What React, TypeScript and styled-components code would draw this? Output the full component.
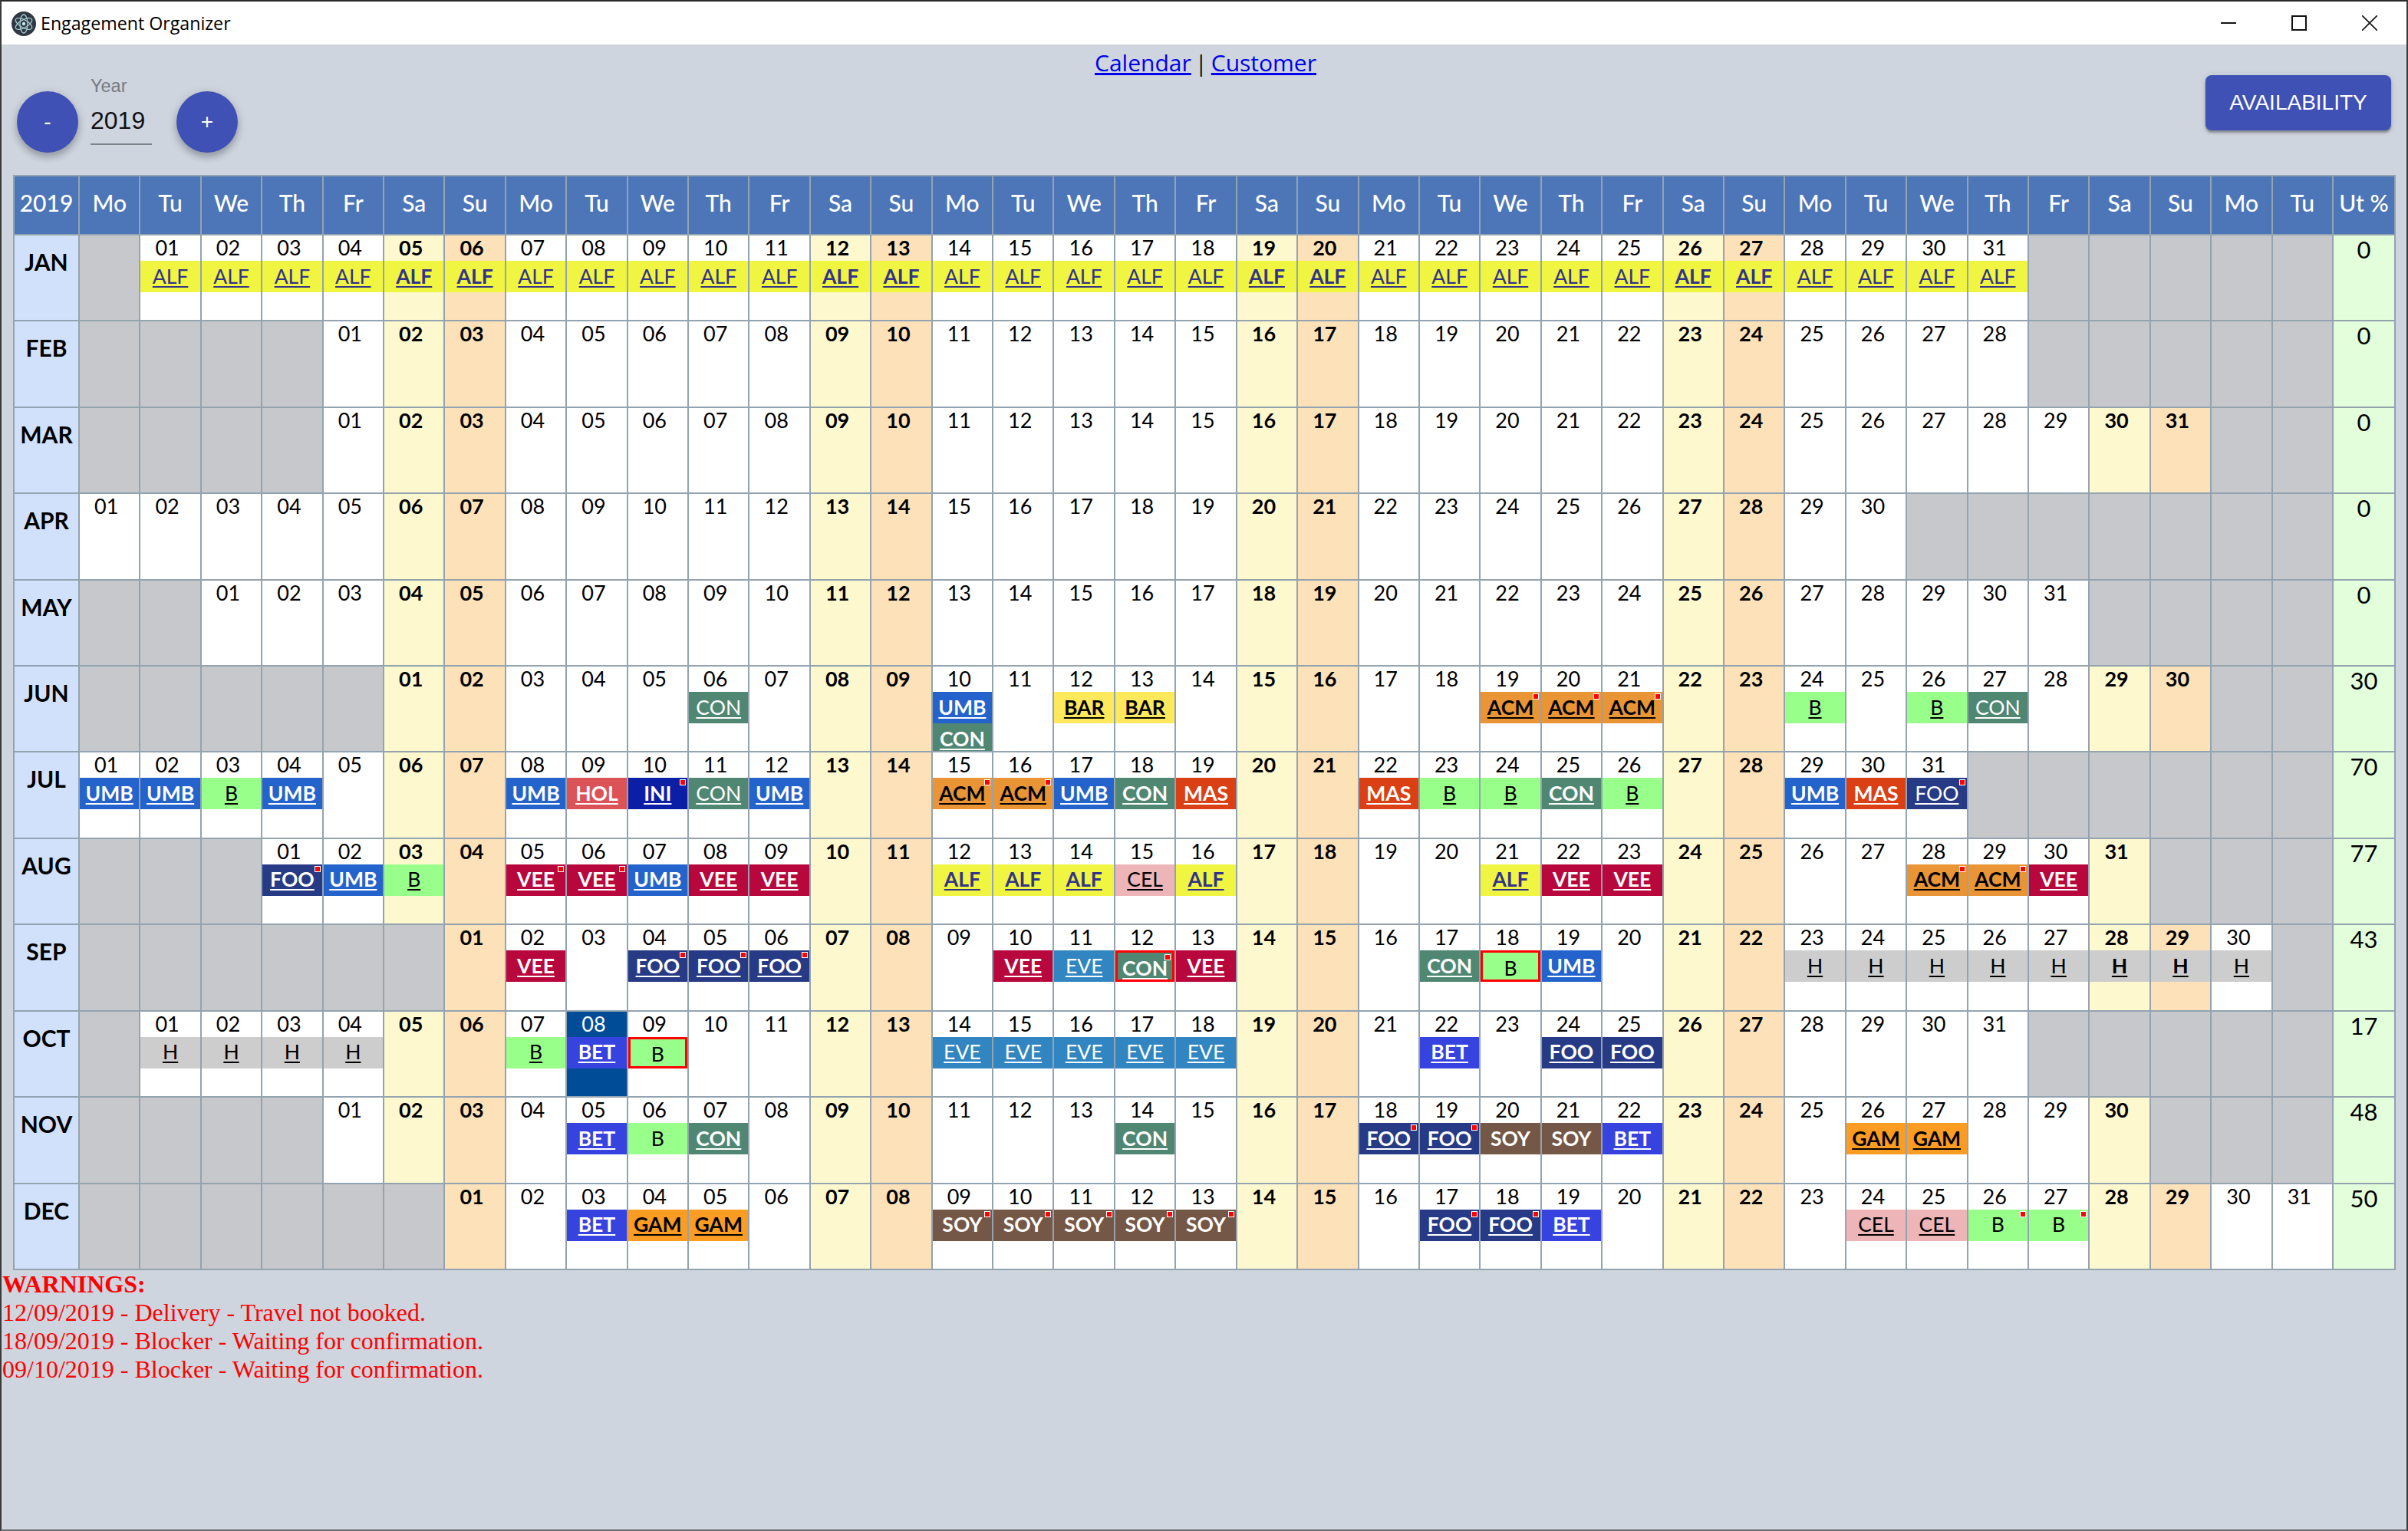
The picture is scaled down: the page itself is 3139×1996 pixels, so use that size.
import React from "react";
import styled, { createGlobalStyle } from "styled-components";

const GlobalStyle = createGlobalStyle`
  html, body {
    margin: 0;
    padding: 0;
    background: #ced5df;
  }
  * {
    box-sizing: border-box;
  }
`;

const DAY_NAMES = ["Mo", "Tu", "We", "Th", "Fr", "Sa", "Su"];
const MONTHS = ["JAN", "FEB", "MAR", "APR", "MAY", "JUN", "JUL", "AUG", "SEP", "OCT", "NOV", "DEC"];
const UTILISATION = [0, 0, 0, 0, 0, 30, 70, 77, 43, 17, 48, 50];
const DAY_COLUMNS = 37;
const YEAR = 2019;

const CLIENT_COLOURS: Record<string, { bg: string; fg: string }> = {
  ALF: { bg: "#f0f542", fg: "#33338a" },
  UMB: { bg: "#2463cb", fg: "#ffffff" },
  CON: { bg: "#4f8773", fg: "#ffffff" },
  BAR: { bg: "#fee85c", fg: "#000000" },
  ACM: { bg: "#e99536", fg: "#000000" },
  HOL: { bg: "#dc5357", fg: "#ffffff" },
  INI: { bg: "#0b1fa6", fg: "#ffffff" },
  MAS: { bg: "#da4013", fg: "#ffffff" },
  B: { bg: "#99ff8b", fg: "#000000" },
  FOO: { bg: "#263a85", fg: "#ffffff" },
  VEE: { bg: "#b8073c", fg: "#ffffff" },
  CEL: { bg: "#edb5b7", fg: "#000000" },
  EVE: { bg: "#3186c2", fg: "#ffffff" },
  H: { bg: "#cdcdcd", fg: "#000000" },
  BET: { bg: "#3643df", fg: "#ffffff" },
  GAM: { bg: "#fd9c22", fg: "#000000" },
  SOY: { bg: "#745747", fg: "#ffffff" },
};

const THIN_CODES = ["EVE", "CEL", "B", "H"];

// day or range : code, then ! warning flag, # red outline, ~ thin text, ^ no underline, ' thin on weekdays
const BOOKINGS: Record<number, string> = {
  0: "1-31:ALF'",
  5: "6:CON~ 10:UMB 10:CON 12:BAR 13:BAR 19-21:ACM! 24:B 26:B 27:CON~",
  6: "1:UMB 2:UMB 3:B 4:UMB 8:UMB 9:HOL 10:INI! 11:CON~ 12:UMB 15:ACM! 16:ACM! 17:UMB 18:CON 19:MAS 22:MAS 23:B 24:B 25:CON 26:B 29:UMB 30:MAS 31:FOO~!",
  7: "1:FOO! 2:UMB 3:B~ 5:VEE! 6:VEE! 7:UMB 8:VEE 9:VEE 12-14:ALF 15:CEL 16:ALF 21:ALF 22:VEE 23:VEE 28:ACM! 29:ACM! 30:VEE",
  8: "2:VEE 4-6:FOO! 10:VEE 11:EVE 12:CON!# 13:VEE 17:CON 18:B^# 19:UMB 23-30:H",
  9: "1-4:H 7:B 8:BET 9:B^# 14-18:EVE 22:BET 24:FOO 25:FOO",
  10: "5:BET 6:B^ 7:CON 14:CON 18:FOO! 19:FOO! 20:SOY^ 21:SOY^ 22:BET 26:GAM 27:GAM",
  11: "3:BET 4:GAM 5:GAM 9-13:SOY^! 17:FOO! 18:FOO! 19:BET 24:CEL 25:CEL 26:B^! 27:B^!",
};

interface Booking {
  code: string;
  flag: boolean;
  outline: boolean;
  thin: boolean;
  light: boolean;
  plain: boolean;
}

const parseBookings = (month: number) => {
  const byDay: Record<number, Booking[]> = {};
  (BOOKINGS[month] || "").split(" ").filter(Boolean).forEach((token) => {
    const [days, rest] = token.split(":");
    const [from, to] = days.split("-").map(Number);
    const code = rest.replace(/[^A-Z]/g, "");
    for (let d = from; d <= (to || from); d++) {
      (byDay[d] = byDay[d] || []).push({
        code,
        flag: rest.includes("!"),
        outline: rest.includes("#"),
        thin: rest.includes("~"),
        light: rest.includes("'") || THIN_CODES.includes(code),
        plain: rest.includes("^"),
      });
    }
  });
  return byDay;
};

const Frame = styled.div`
  width: 3139px;
  height: 1996px;
  display: flex;
  flex-direction: column;
  background: #ced5df;
  border-top: 2px solid #2b2b2b;
  border-left: 2px solid #3a3a3a;
  border-right: 2px solid #3a3a3a;
  border-bottom: 2px solid #6b6b6b;
  overflow: hidden;
`;

const TitleBar = styled.div`
  height: 56px;
  flex-shrink: 0;
  display: flex;
  align-items: center;
  background: #ffffff;
  padding: 0 2px 0 13px;
`;

const AppIcon = styled.svg`
  width: 32px;
  height: 32px;
  margin-right: 6px;
  margin-top: 2px;
`;

const AppTitle = styled.span`
  flex: 1;
  font-family: "Open Sans", sans-serif;
  font-size: 23.2px;
  color: #000000;
`;

const WindowButton = styled.div`
  width: 92px;
  height: 56px;
  display: flex;
  align-items: center;
  justify-content: center;
  svg {
    display: block;
  }
`;

const Toolbar = styled.div`
  height: 170px;
  flex-shrink: 0;
  display: grid;
  grid-template-columns: 1fr auto 1fr;
`;

const YearGroup = styled.div`
  align-self: end;
  display: flex;
  align-items: flex-end;
  padding: 0 0 29px 20px;
`;

const RoundButton = styled.button`
  width: 80px;
  height: 80px;
  border: none;
  border-radius: 50%;
  background: #3f51b5;
  color: #ffffff;
  font-family: "Liberation Sans", sans-serif;
  font-size: 28px;
  box-shadow: 0 6px 10px rgba(0, 0, 0, 0.22), 0 2px 14px rgba(0, 0, 0, 0.12);
  padding: 0;
`;

const YearField = styled.div`
  width: 80px;
  margin: 0 32px 10px 16px;
  font-family: "Liberation Sans", sans-serif;
  border-bottom: 2px solid #808488;
`;

const YearLabel = styled.div`
  font-size: 23.5px;
  line-height: 28px;
  padding-bottom: 2px;
  color: #777c82;
`;

const YearValue = styled.div`
  font-size: 32px;
  line-height: 36px;
  padding: 11px 0 12px;
  color: #111111;
`;

const NavLinks = styled.div`
  padding: 4px 0 0 4px;
  font-family: "Open Sans", sans-serif;
  font-size: 30px;
  line-height: 40px;
  word-spacing: -3px;
  color: #111111;
  a {
    color: #0000ee;
    text-decoration: underline;
  }
`;

const ActionCell = styled.div`
  display: flex;
  justify-content: flex-end;
  align-items: flex-start;
  padding: 40px 20px 0 0;
`;

const AvailabilityButton = styled.button`
  width: 242px;
  height: 72px;
  border: none;
  border-radius: 8px;
  background: #3f51b5;
  color: #ffffff;
  font-family: "Liberation Sans", sans-serif;
  font-size: 28px;
  padding: 0;
  box-shadow: 0 3px 3px rgba(0, 0, 0, 0.3), 0 1px 8px rgba(0, 0, 0, 0.12);
`;

const Calendar = styled.div`
  width: 3106px;
  height: 1428px;
  margin-left: 15px;
  flex-shrink: 0;
  padding: 2px;
  display: grid;
  grid-template-columns: 83px repeat(${DAY_COLUMNS}, 1fr) 79px;
  grid-template-rows: 75px repeat(12, 1fr);
  gap: 2px;
  background: #93a3b0;
  font-family: "Lato", sans-serif;
`;

const HeadCell = styled.div`
  display: flex;
  align-items: center;
  justify-content: center;
  padding-bottom: 7px;
  background: #4d76b8;
  color: #ffffff;
  font-size: 30px;
  font-weight: 500;
`;

const MonthCell = styled.div`
  background: #d1e1fc;
  color: #000000;
  font-size: 30px;
  font-weight: 700;
  line-height: 36px;
  text-align: center;
  padding-top: 16px;
`;

const UtilCell = styled.div`
  background: #e3fedb;
  color: #000000;
  font-size: 31px;
  line-height: 34px;
  text-align: center;
  padding-top: 1px;
`;

const EmptyCell = styled.div`
  background: #c6c8cc;
`;

const DayCell = styled.div<{ $weekday: number; $today: boolean }>`
  display: flex;
  flex-direction: column;
  min-width: 0;
  min-height: 0;
  overflow: hidden;
  background: ${(p) =>
    p.$today ? "#004c97" : p.$weekday === 5 ? "#fef8cf" : p.$weekday === 6 ? "#fde2b9" : "#ffffff"};
  color: ${(p) => (p.$today ? "#ffffff" : "#000000")};
`;

const DayNumber = styled.div<{ $bold: boolean }>`
  flex-shrink: 0;
  height: 33px;
  line-height: 31px;
  padding-right: 8px;
  text-align: center;
  font-size: 27px;
  font-weight: ${(p) => (p.$bold ? 700 : 400)};
`;

const Bar = styled.div<{ $code: string; $outline: boolean; $bold: boolean; $plain: boolean }>`
  position: relative;
  flex-shrink: 0;
  height: 41px;
  display: flex;
  align-items: center;
  justify-content: center;
  background: ${(p) => CLIENT_COLOURS[p.$code].bg};
  color: ${(p) => CLIENT_COLOURS[p.$code].fg};
  font-size: 26.5px;
  font-weight: ${(p) => (p.$bold ? 700 : 400)};
  text-decoration: ${(p) => (p.$plain ? "none" : "underline")};
  text-decoration-thickness: 2px;
  text-underline-offset: 3px;
  text-decoration-skip-ink: none;
  border: ${(p) => (p.$outline ? "3px solid #ff0000" : "none")};
  padding: ${(p) => (p.$outline ? "4px 0 0" : "0 0 2px")};
`;

const Flag = styled.span`
  position: absolute;
  top: 2px;
  right: 2px;
  width: 8px;
  height: 8px;
  background: #ff0000;
  border: 1px solid #ffffff;
`;

const Warnings = styled.div`
  padding-left: 1px;
  font-family: "Liberation Serif", serif;
  font-size: 32px;
  line-height: 37px;
  color: #ff0000;
`;

const WarningTitle = styled.div`
  font-weight: 700;
`;

const ElectronIcon = () => (
  <AppIcon viewBox="0 0 32 32">
    <circle cx="16" cy="16" r="16" fill="#2f3742" />
    <g fill="none" stroke="#a6c9cf" strokeWidth="1.3">
      <ellipse cx="16" cy="16" rx="12" ry="5" transform="rotate(30 16 16)" />
      <ellipse cx="16" cy="16" rx="12" ry="5" transform="rotate(90 16 16)" />
      <ellipse cx="16" cy="16" rx="12" ry="5" transform="rotate(150 16 16)" />
    </g>
    <circle cx="16" cy="16" r="2.2" fill="#c9e6ea" />
  </AppIcon>
);

const MonthRow = ({ month }: { month: number }) => {
  const offset = (new Date(YEAR, month, 1).getDay() + 6) % 7;
  const length = new Date(YEAR, month + 1, 0).getDate();
  const bookings = parseBookings(month);
  const cells = [];
  for (let col = 0; col < DAY_COLUMNS; col++) {
    const day = col - offset + 1;
    if (day < 1 || day > length) {
      cells.push(<EmptyCell key={col} />);
      continue;
    }
    const weekday = col % 7;
    const weekend = weekday >= 5;
    cells.push(
      <DayCell key={col} $weekday={weekday} $today={month === 9 && day === 8}>
        <DayNumber $bold={weekend}>{String(day).padStart(2, "0")}</DayNumber>
        {(bookings[day] || []).map((b, i) => (
          <Bar
            key={i}
            $code={b.code}
            $outline={b.outline}
            $plain={b.plain}
            $bold={!b.thin && (weekend || !b.light)}
          >
            {b.code}
            {b.flag && <Flag />}
          </Bar>
        ))}
      </DayCell>
    );
  }
  return (
    <>
      <MonthCell>{MONTHS[month]}</MonthCell>
      {cells}
      <UtilCell>{UTILISATION[month]}</UtilCell>
    </>
  );
};

export default function App() {
  const headers = Array.from({ length: DAY_COLUMNS }, (_, i) => DAY_NAMES[i % 7]);
  return (
    <Frame>
      <GlobalStyle />
      <TitleBar>
        <ElectronIcon />
        <AppTitle>Engagement Organizer</AppTitle>
        <WindowButton>
          <svg width="20" height="20" viewBox="0 0 20 20">
            <path d="M0 10h20" stroke="#111" strokeWidth="2" />
          </svg>
        </WindowButton>
        <WindowButton>
          <svg width="20" height="20" viewBox="0 0 20 20">
            <rect x="1" y="1" width="18" height="18" fill="none" stroke="#111" strokeWidth="2" />
          </svg>
        </WindowButton>
        <WindowButton>
          <svg width="20" height="20" viewBox="0 0 20 20">
            <path d="M0 0l20 20M20 0L0 20" stroke="#111" strokeWidth="1.6" />
          </svg>
        </WindowButton>
      </TitleBar>
      <Toolbar>
        <YearGroup>
          <RoundButton>-</RoundButton>
          <YearField>
            <YearLabel>Year</YearLabel>
            <YearValue>{YEAR}</YearValue>
          </YearField>
          <RoundButton>+</RoundButton>
        </YearGroup>
        <NavLinks>
          <a href="#calendar">Calendar</a> | <a href="#customer">Customer</a>
        </NavLinks>
        <ActionCell>
          <AvailabilityButton>AVAILABILITY</AvailabilityButton>
        </ActionCell>
      </Toolbar>
      <Calendar>
        <HeadCell>{YEAR}</HeadCell>
        {headers.map((name, i) => (
          <HeadCell key={i}>{name}</HeadCell>
        ))}
        <HeadCell>Ut %</HeadCell>
        {MONTHS.map((_, m) => (
          <MonthRow key={m} month={m} />
        ))}
      </Calendar>
      <Warnings>
        <WarningTitle>WARNINGS:</WarningTitle>
        <div>12/09/2019 - Delivery - Travel not booked.</div>
        <div>18/09/2019 - Blocker - Waiting for confirmation.</div>
        <div>09/10/2019 - Blocker - Waiting for confirmation.</div>
      </Warnings>
    </Frame>
  );
}
